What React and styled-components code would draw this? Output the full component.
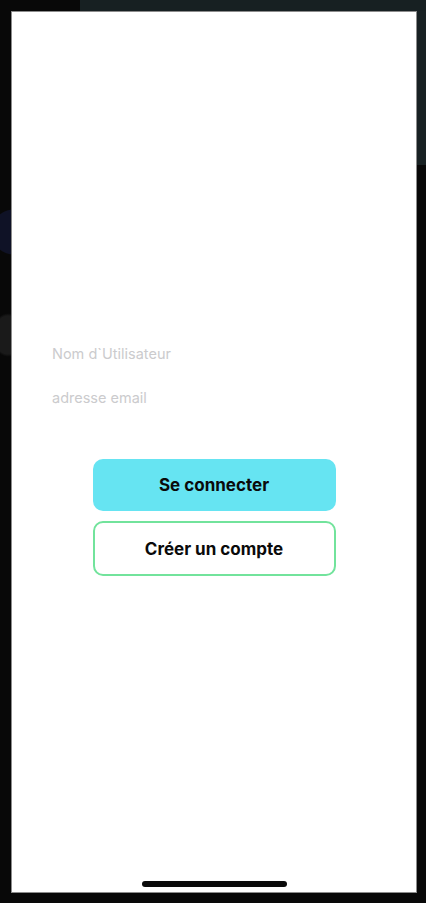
import React from 'react';
import styled, { createGlobalStyle } from 'styled-components';

const GlobalStyle = createGlobalStyle`
  html, body {
    margin: 0;
    padding: 0;
    background: #080808;
  }
  * {
    box-sizing: border-box;
  }
`;

const Page = styled.div`
  width: 426px;
  height: 903px;
  padding: 11px 9px 10px 11px;
  background:
    linear-gradient(#172022, #172022) 80px 0 / 346px 11px no-repeat,
    linear-gradient(#182123, #182123) 417px 0 / 9px 165px no-repeat,
    radial-gradient(circle at 14px 232px, #0f1226 0, #0f1226 22px, transparent 23px),
    radial-gradient(ellipse at 8px 335px, #1a1a1a 0, #1a1a1a 14px, transparent 16px),
    #080808;
`;

const Screen = styled.div`
  height: 100%;
  background: #ffffff;
  border: 1px solid #8c8c8c;
  display: flex;
  flex-direction: column;
  padding-top: 320px;
  font-family: Inter, "Liberation Sans", Arial, sans-serif;
`;

const Field = styled.div`
  height: 44px;
  line-height: 44px;
  padding-left: 40px;
  font-size: 14.5px;
  color: #cbcbcd;
`;

const Actions = styled.div`
  display: flex;
  flex-direction: column;
  align-items: center;
  gap: 10px;
  margin-top: 39px;
`;

const Button = styled.div`
  width: 243px;
  height: ${p => (p.outline ? 55 : 52)}px;
  border-radius: 10px;
  display: flex;
  align-items: center;
  justify-content: center;
  font-size: 17px;
  font-weight: 700;
  color: #0a0a0a;
  background: ${p => (p.outline ? '#ffffff' : '#66e4f2')};
  border: ${p => (p.outline ? '2px solid #72e39c' : 'none')};
`;

const HomeBar = styled.div`
  margin: auto auto 5px;
  width: 145px;
  height: 6px;
  border-radius: 3px;
  background: #0a0a0a;
`;

export default function App() {
  return (
    <>
      <GlobalStyle />
      <Page>
        <Screen>
          <Field>Nom d`Utilisateur</Field>
          <Field>adresse email</Field>
          <Actions>
            <Button>Se connecter</Button>
            <Button outline>Créer un compte</Button>
          </Actions>
          <HomeBar />
        </Screen>
      </Page>
    </>
  );
}
